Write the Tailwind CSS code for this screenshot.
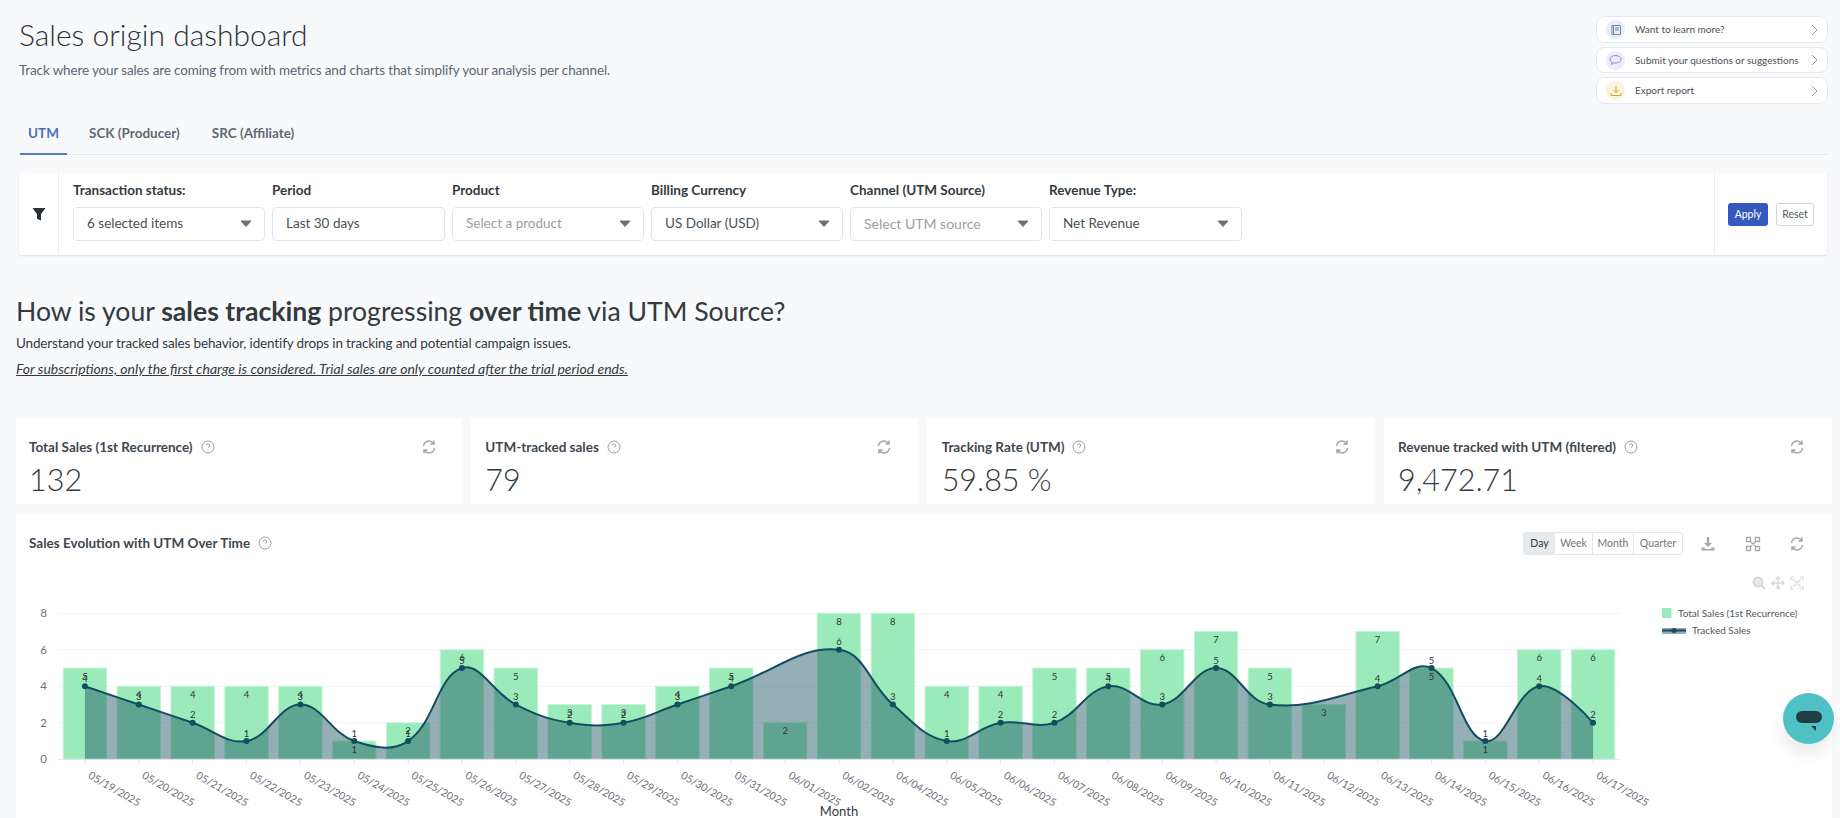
<!DOCTYPE html>
<html lang="en">
<head>
  <meta charset="UTF-8">
  <title>Sales origin dashboard</title>
  <script src="https://cdn.jsdelivr.net/npm/@tailwindcss/browser@4"></script>
</head>
<body class="relative h-[818px] overflow-hidden bg-[#f8f9fb] font-[Lato,sans-serif] text-[#343a40]">

  <!-- Header -->
  <header class="flex justify-between pl-[19px] pr-[12px] pt-[16px]">
    <div>
      <h1 class="-mt-[1px] pb-[1px] text-[30px] leading-[38px] font-light text-[#2c3137]">Sales origin dashboard</h1>
      <p class="mt-[6px] text-[13.5px] leading-[20px] tracking-[-0.14px] text-[#5f6670]">Track where your sales are coming from with metrics and charts that simplify your analysis per channel.</p>
    </div>
    <div class="flex w-[232px] flex-col gap-[4px]">
      <a class="flex h-[27px] items-center rounded-[8px] border border-[#e3e7ee] bg-white pl-[9px] pr-[9px] text-[10px] text-[#4b5058]">
        <span class="flex h-[19px] w-[19px] items-center justify-center rounded-full bg-[#e8ecf4]">
          <svg width="12" height="12" viewBox="0 0 12 12" fill="none" stroke="#6f86b8" stroke-width="1"><path d="M2 1.500h8.500v9H2zM3.500 1.500v9M5 4h4M5 6h4"/></svg>
        </span>
        <span class="ml-[10px] flex-1 whitespace-nowrap">Want to learn more?</span>
        <svg width="7" height="12" viewBox="0 0 7 12" fill="none" stroke="#8b9ab5" stroke-width="1"><path d="M1 1l5 5-5 5"/></svg>
      </a>
      <a class="flex h-[26px] items-center rounded-[8px] border border-[#e3e7ee] bg-white pl-[9px] pr-[9px] text-[10px] text-[#4b5058]">
        <span class="flex h-[19px] w-[19px] items-center justify-center rounded-full bg-[#efe9fb]">
          <svg width="13" height="12" viewBox="0 0 13 12" fill="none" stroke="#8d7fd0" stroke-width="0.9"><path d="M6.500 1.500c3 0 5.500 1.600 5.500 3.800S9.500 9 6.500 9c-.7 0-1.300-.1-1.900-.2L2.500 10.500l.4-2.300C1.700 7.500 1 6.500 1 5.300 1 3.100 3.500 1.500 6.500 1.500z"/></svg>
        </span>
        <span class="ml-[10px] flex-1 whitespace-nowrap">Submit your questions or suggestions</span>
        <svg width="7" height="12" viewBox="0 0 7 12" fill="none" stroke="#8b9ab5" stroke-width="1"><path d="M1 1l5 5-5 5"/></svg>
      </a>
      <a class="flex h-[27px] items-center rounded-[8px] border border-[#e3e7ee] bg-white pl-[9px] pr-[9px] text-[10px] text-[#4b5058]">
        <span class="flex h-[19px] w-[19px] items-center justify-center rounded-full bg-[#fbf4dc]">
          <svg width="12" height="12" viewBox="0 0 12 12" fill="none" stroke="#d5a52f" stroke-width="1"><path d="M6 1v6.500M3.500 5.200L6 7.700l2.500-2.500M1 8v2.500h10V8"/></svg>
        </span>
        <span class="ml-[10px] flex-1 whitespace-nowrap">Export report</span>
        <svg width="7" height="12" viewBox="0 0 7 12" fill="none" stroke="#8b9ab5" stroke-width="1"><path d="M1 1l5 5-5 5"/></svg>
      </a>
    </div>
  </header>

  <!-- Tabs -->
  <nav class="ml-[19px] mr-[13px] mt-[10px] flex gap-[12px] border-b border-[#e2e6ee] text-[13.5px] font-bold">
    <a class="-mb-px ml-[1px] flex h-[41px] w-[47px] items-center justify-center border-b-2 border-[#5a78c8] text-[#4f6fc0]">UTM</a>
    <a class="flex h-[40px] items-center px-[10px] pb-[1px] text-[#626973]">SCK (Producer)</a>
    <a class="flex h-[40px] items-center px-[10px] pb-[1px] text-[#626973]">SRC (Affiliate)</a>
  </nav>

  <!-- Filters -->
  <section class="ml-[19px] mr-[13px] mt-[18px] flex h-[82px] rounded-[3px] bg-white shadow-[0_1px_2px_rgba(0,0,0,0.12)]">
    <div class="my-[1px] flex w-[40px] items-center justify-center border-r border-[#e9ecf1]">
      <svg width="14" height="14" viewBox="0 0 14 14" fill="#2b2f36"><path d="M0.500 1h13L9 7v6.500l-4-1.700V7z"/></svg>
    </div>
    <div class="flex flex-1 gap-[7px] pl-[14px] pt-[8px]">
      <div class="w-[192px]">
        <label class="block text-[13.5px] leading-[18px] font-bold text-[#343a40]">Transaction status:</label>
        <div class="mt-[8px] flex h-[34px] items-center justify-between rounded-[4px] border border-[#e2e6ec] pb-[1px] pl-[13px] pr-[11px] text-[13.5px] text-[#495057]">6 selected items
          <svg width="14" height="9" viewBox="0 0 14 9" fill="#6c7178" stroke="#6c7178" stroke-linejoin="round"><path d="M2 2h10L7 7.500z"/></svg></div>
      </div>
      <div class="w-[173px]">
        <label class="block text-[13.5px] leading-[18px] font-bold text-[#343a40]">Period</label>
        <div class="mt-[8px] flex h-[34px] items-center rounded-[4px] border border-[#e2e6ec] pb-[1px] pl-[13px] text-[13.5px] text-[#495057]">Last 30 days</div>
      </div>
      <div class="w-[192px]">
        <label class="block text-[13.5px] leading-[18px] font-bold text-[#343a40]">Product</label>
        <div class="mt-[8px] flex h-[34px] items-center justify-between rounded-[4px] border border-[#e2e6ec] pb-[1px] pl-[13px] pr-[11px] text-[13.5px] text-[#9aa0a8]">Select a product
          <svg width="14" height="9" viewBox="0 0 14 9" fill="#6c7178" stroke="#6c7178" stroke-linejoin="round"><path d="M2 2h10L7 7.500z"/></svg></div>
      </div>
      <div class="w-[192px]">
        <label class="block text-[13.5px] leading-[18px] font-bold text-[#343a40]">Billing Currency</label>
        <div class="mt-[8px] flex h-[34px] items-center justify-between rounded-[4px] border border-[#e2e6ec] pb-[1px] pl-[13px] pr-[11px] text-[13.5px] text-[#495057]">US Dollar (USD)
          <svg width="14" height="9" viewBox="0 0 14 9" fill="#6c7178" stroke="#6c7178" stroke-linejoin="round"><path d="M2 2h10L7 7.500z"/></svg></div>
      </div>
      <div class="w-[192px]">
        <label class="block text-[13.5px] leading-[18px] font-bold text-[#343a40]">Channel (UTM Source)</label>
        <div class="mt-[8px] flex h-[34px] items-center justify-between rounded-[4px] border border-[#e2e6ec] pb-[1px] pl-[13px] pr-[11px] text-[14px] text-[#9aa0a8]">Select UTM source
          <svg width="14" height="9" viewBox="0 0 14 9" fill="#6c7178" stroke="#6c7178" stroke-linejoin="round"><path d="M2 2h10L7 7.500z"/></svg></div>
      </div>
      <div class="w-[193px]">
        <label class="block text-[13.5px] leading-[18px] font-bold text-[#343a40]">Revenue Type:</label>
        <div class="mt-[8px] flex h-[34px] items-center justify-between rounded-[4px] border border-[#e2e6ec] pb-[1px] pl-[13px] pr-[11px] text-[13.5px] text-[#495057]">Net Revenue
          <svg width="14" height="9" viewBox="0 0 14 9" fill="#6c7178" stroke="#6c7178" stroke-linejoin="round"><path d="M2 2h10L7 7.500z"/></svg></div>
      </div>
    </div>
    <div class="my-[1px] flex w-[113px] items-start gap-[8px] border-l border-[#e9ecf1] pl-[13px] pt-[29px]">
      <button class="h-[23px] w-[40px] rounded-[3px] bg-[#3557be] text-[10.5px] text-white">Apply</button>
      <button class="h-[23px] w-[38px] rounded-[3px] border border-[#ced4da] bg-white text-[10.5px] text-[#555b63]">Reset</button>
    </div>
  </section>

  <!-- Section intro -->
  <section class="mt-[39px] pl-[16px]">
    <h2 class="text-[26.6px] leading-[34px] font-normal text-[#343a40]">How is your <strong class="font-bold">sales tracking</strong> progressing <strong class="font-bold">over time</strong> via UTM Source?</h2>
    <p class="mt-[5px] text-[13.5px] leading-[20px] tracking-[-0.15px] text-[#343a40]">Understand your tracked sales behavior, identify drops in tracking and potential campaign issues.</p>
    <p class="mt-[6px] text-[14px] leading-[20px] italic underline text-[#343a40]">For subscriptions, only the first charge is considered. Trial sales are only counted after the trial period ends.</p>
  </section>

  <!-- KPI cards -->
  <section class="ml-[16px] mr-[8px] mt-[39px] grid grid-cols-[446px_446px_448px_448px] gap-[9.33px]">
    <div class="h-[86px] bg-white pl-[13px] pr-[25px] pt-[19px]">
      <div class="flex h-[20px] items-center text-[13.5px] font-bold text-[#414750]">Total Sales (1st Recurrence)
        <svg class="ml-[8px]" width="14" height="14" viewBox="0 0 14 14" fill="none" stroke="#9a9fa6"><circle cx="7" cy="7" r="6"/><path d="M5.300 5.500a1.700 1.700 0 1 1 2.500 1.500c-.6.300-.8.700-.8 1.200M7 10v.7"/></svg>
        <svg class="ml-auto" width="16" height="16" viewBox="0 0 16 16" fill="none" stroke="#a3a8ae" stroke-width="1.500"><path d="M2.500 7A5.500 5.500 0 0 1 12.500 4.500M13.500 9A5.500 5.500 0 0 1 3.500 11.500M13 1.500v3.500H9.500M3 14.500V11h3.500"/></svg>
      </div>
      <div class="mt-[4px] text-[30.5px] leading-[36px] font-light text-[#343a40]">132</div>
    </div>
    <div class="h-[86px] bg-white pl-[14px] pr-[25px] pt-[19px]">
      <div class="flex h-[20px] items-center text-[13.5px] font-bold text-[#414750]">UTM-tracked sales
        <svg class="ml-[8px]" width="14" height="14" viewBox="0 0 14 14" fill="none" stroke="#9a9fa6"><circle cx="7" cy="7" r="6"/><path d="M5.300 5.500a1.700 1.700 0 1 1 2.500 1.500c-.6.300-.8.700-.8 1.200M7 10v.7"/></svg>
        <svg class="ml-auto" width="16" height="16" viewBox="0 0 16 16" fill="none" stroke="#a3a8ae" stroke-width="1.500"><path d="M2.500 7A5.500 5.500 0 0 1 12.500 4.500M13.500 9A5.500 5.500 0 0 1 3.500 11.500M13 1.500v3.500H9.500M3 14.500V11h3.500"/></svg>
      </div>
      <div class="mt-[4px] text-[30.5px] leading-[36px] font-light text-[#343a40]">79</div>
    </div>
    <div class="h-[86px] bg-white pl-[15px] pr-[25px] pt-[19px]">
      <div class="flex h-[20px] items-center text-[13.5px] font-bold text-[#414750]">Tracking Rate (UTM)
        <svg class="ml-[8px]" width="14" height="14" viewBox="0 0 14 14" fill="none" stroke="#9a9fa6"><circle cx="7" cy="7" r="6"/><path d="M5.300 5.500a1.700 1.700 0 1 1 2.500 1.500c-.6.300-.8.700-.8 1.200M7 10v.7"/></svg>
        <svg class="ml-auto" width="16" height="16" viewBox="0 0 16 16" fill="none" stroke="#a3a8ae" stroke-width="1.500"><path d="M2.500 7A5.500 5.500 0 0 1 12.500 4.500M13.500 9A5.500 5.500 0 0 1 3.500 11.500M13 1.500v3.500H9.500M3 14.500V11h3.500"/></svg>
      </div>
      <div class="mt-[4px] text-[30.5px] leading-[36px] font-light text-[#343a40]">59.85 %</div>
    </div>
    <div class="h-[86px] bg-white pl-[14px] pr-[27px] pt-[19px]">
      <div class="flex h-[20px] items-center text-[13.5px] font-bold text-[#414750]">Revenue tracked with UTM (filtered)
        <svg class="ml-[8px]" width="14" height="14" viewBox="0 0 14 14" fill="none" stroke="#9a9fa6"><circle cx="7" cy="7" r="6"/><path d="M5.300 5.500a1.700 1.700 0 1 1 2.500 1.500c-.6.300-.8.700-.8 1.200M7 10v.7"/></svg>
        <svg class="ml-auto" width="16" height="16" viewBox="0 0 16 16" fill="none" stroke="#a3a8ae" stroke-width="1.500"><path d="M2.500 7A5.500 5.500 0 0 1 12.500 4.500M13.500 9A5.500 5.500 0 0 1 3.500 11.500M13 1.500v3.500H9.500M3 14.500V11h3.500"/></svg>
      </div>
      <div class="mt-[4px] text-[30.5px] leading-[36px] font-light text-[#343a40]">9,472.71</div>
    </div>
  </section>

  <!-- Chart card -->
  <section class="ml-[16px] mr-[8px] mt-[10px] bg-white">
    <div class="flex h-[41px] items-start pl-[13px] pr-[27px] pt-[18px]">
      <div class="flex h-[23px] items-center pb-[1px] text-[13.5px] font-bold text-[#414750]">Sales Evolution with UTM Over Time
        <svg class="ml-[8px]" width="14" height="14" viewBox="0 0 14 14" fill="none" stroke="#9a9fa6"><circle cx="7" cy="7" r="6"/><path d="M5.300 5.500a1.700 1.700 0 1 1 2.500 1.500c-.6.300-.8.700-.8 1.200M7 10v.7"/></svg>
      </div>
      <div class="ml-auto flex items-center">
        <div class="flex h-[23px] overflow-hidden rounded-[3px] border border-[#e2e6ec] text-[10.5px] text-[#6f757d]">
          <span class="flex w-[31px] items-center justify-center bg-[#e6e9ed] text-[#343a40]">Day</span>
          <span class="flex w-[38px] items-center justify-center border-r border-[#e2e6ec]">Week</span>
          <span class="flex w-[41px] items-center justify-center border-r border-[#e2e6ec]">Month</span>
          <span class="flex w-[48px] items-center justify-center">Quarter</span>
        </div>
        <svg class="ml-[17px]" width="16" height="16" viewBox="0 0 16 16" fill="#a3a8ae"><path d="M6.800 1h2.400v6h2.800L8 11 4 7h2.800zM1.500 11.500h3l1 1.500h5l1-1.500h3v3h-13z"/></svg>
        <svg class="ml-[29px]" width="16" height="16" viewBox="0 0 16 16" fill="none" stroke="#a3a8ae" stroke-width="1.300"><path d="M1.500 1.500h4v4h-4zM10.500 1.500h4v4h-4zM1.500 10.500h4v4h-4zM10.500 10.500h4v4h-4zM5.500 5.500l5 5M10.500 5.500l-5 5"/></svg>
        <svg class="ml-[28px]" width="16" height="16" viewBox="0 0 16 16" fill="none" stroke="#a3a8ae" stroke-width="1.500"><path d="M2.500 7A5.500 5.500 0 0 1 12.500 4.500M13.500 9A5.500 5.500 0 0 1 3.500 11.500M13 1.500v3.500H9.500M3 14.500V11h3.500"/></svg>
      </div>
    </div>
    <!-- viewBox uses page coordinates so positions read straight off the screenshot -->
    <svg id="chart" class="block" width="1816" height="263" viewBox="16 555 1816 263"></svg>
  </section>

  <!-- Chat widget -->
  <div class="absolute left-[1783px] top-[693px] flex h-[51px] w-[51px] items-center justify-center rounded-full bg-[#4fc1c4] pb-[3px] shadow-[-2px_12px_14px_rgba(0,0,0,0.07)]">
    <span class="relative block h-[12px] w-[26px] rounded-full bg-[#1f3d42]">
      <svg class="absolute left-[15px] top-[15px]" width="5" height="5" viewBox="0 0 5 5" fill="#1f3d42"><path d="M0 0h5v5z"/></svg>
    </span>
  </div>

  <script>
    var dates = ['05/19','05/20','05/21','05/22','05/23','05/24','05/25','05/26','05/27','05/28','05/29','05/30','05/31','06/01','06/02','06/04','06/05','06/06','06/07','06/08','06/09','06/10','06/11','06/12','06/13','06/14','06/15','06/16','06/17'];
    var total = [5,4,4,4,4,1,2,6,5,3,3,4,5,2,8,8,4,4,5,5,6,7,5,3,7,5,1,6,6];
    var tracked = [4,3,2,1,3,1,1,5,3,2,2,3,4,null,6,3,1,2,2,4,3,5,3,null,4,5,1,4,2];
    var svg = document.getElementById('chart');
    var left = 58, right = 1620, base = 759.3, unit = 18.25, step = (right - left) / dates.length;
    function X(i) { return left + step * (i + 0.5); }
    function Y(v) { return base - v * unit; }

    function add(tag, attrs, text) {
      var el = document.createElementNS('http://www.w3.org/2000/svg', tag);
      for (var k in attrs) el.setAttribute(k, attrs[k]);
      if (text !== undefined) el.textContent = text;
      svg.appendChild(el);
      return el;
    }

    // grid and y axis
    [0,2,4,6,8].forEach(function (v) {
      if (v) add('line', { x1: left, x2: right, y1: Y(v), y2: Y(v), stroke: '#f1f3f6' });
      add('text', { x: 47, y: Y(v) + 4, 'text-anchor': 'end', 'font-size': 11.5, fill: '#6e7079' }, v);
    });

    // bars
    total.forEach(function (v, i) {
      add('rect', { x: X(i) - 21.7, y: Y(v), width: 43.4, height: v * unit, fill: '#9bebba', stroke: '#c4f3d7', 'stroke-width': 1 });
    });

    // smoothed line, skips empty days like connectNulls
    var pts = [];
    tracked.forEach(function (v, i) { if (v !== null) pts.push([X(i), Y(v)]); });
    var smooth = 0.4, d = 'M' + pts[0][0] + ' ' + pts[0][1];
    function vec(i) {
      if (i === 0 || i === pts.length - 1) return [0, 0, 0.5];
      var p = pts[i - 1], c = pts[i], n = pts[i + 1];
      var a = Math.hypot(c[0] - p[0], c[1] - p[1]), b = Math.hypot(n[0] - c[0], n[1] - c[1]);
      return [n[0] - p[0], n[1] - p[1], b / (a + b)];
    }
    for (var i = 0; i < pts.length - 1; i++) {
      var v0 = vec(i), v1 = vec(i + 1);
      var c1x = pts[i][0] + v0[0] * smooth * v0[2], c1y = pts[i][1] + v0[1] * smooth * v0[2];
      var c2x = pts[i + 1][0] - v1[0] * smooth * (1 - v1[2]), c2y = pts[i + 1][1] - v1[1] * smooth * (1 - v1[2]);
      d += 'C' + c1x + ' ' + c1y + ' ' + c2x + ' ' + c2y + ' ' + pts[i + 1][0] + ' ' + pts[i + 1][1];
    }
    add('path', { d: d + 'L' + pts[pts.length - 1][0] + ' ' + base + 'L' + pts[0][0] + ' ' + base + 'Z', fill: '#134e5e', 'fill-opacity': 0.45 });
    add('path', { d: d, fill: 'none', stroke: '#134e5e', 'stroke-width': 2 });
    pts.forEach(function (p) { add('circle', { cx: p[0], cy: p[1], r: 3, fill: '#134e5e' }); });

    // x axis
    add('line', { x1: left, x2: right, y1: base, y2: base, stroke: '#dfe3ea' });
    dates.forEach(function (s, i) {
      add('line', { x1: X(i), x2: X(i), y1: base, y2: base + 5, stroke: '#dfe3ea' });
      add('text', { x: X(i) + 4, y: 778, 'font-size': 10.5, fill: '#6e7079', transform: 'rotate(30 ' + (X(i) + 4) + ' 775)' }, s + '/2025');
    });
    add('text', { x: 839, y: 816, 'text-anchor': 'middle', 'font-size': 13, fill: '#343a40' }, 'Month');

    // value labels
    total.forEach(function (v, i) {
      add('text', { x: X(i), y: Y(v) + 11.5, 'text-anchor': 'middle', 'font-size': 9.5, fill: '#333' }, v);
    });
    tracked.forEach(function (v, i) {
      if (v !== null) add('text', { x: X(i), y: Y(v) - 4.5, 'text-anchor': 'middle', 'font-size': 9.5, fill: '#333' }, v);
    });

    // toolbox
    var g = '#d5d9de';
    add('circle', { cx: 1758, cy: 582, r: 4.5, fill: '#e6e8eb', stroke: g, 'stroke-width': 2 });
    add('path', { d: 'M1761 585l4 4', stroke: g, 'stroke-width': 2 });
    add('path', { d: 'M1778 577v12M1772 583h12M1776 579l2-2 2 2M1776 587l2 2 2-2M1774 581l-2 2 2 2M1782 581l2 2-2 2', fill: 'none', stroke: g, 'stroke-width': 1.5 });
    add('path', { d: 'M1791 580v-3h3M1800 577h3v3M1803 586v3h-3M1794 589h-3v-3M1793 579l8 8M1801 579l-8 8', fill: 'none', stroke: g, 'stroke-width': 1.2 });

    // legend
    add('rect', { x: 1662, y: 608, width: 9.5, height: 10, fill: '#9bebba' });
    add('text', { x: 1678, y: 616.5, 'font-size': 10, fill: '#51565e' }, 'Total Sales (1st Recurrence)');
    add('rect', { x: 1662, y: 628, width: 24, height: 6, fill: '#94abb3' });
    add('line', { x1: 1662, x2: 1686, y1: 630.5, y2: 630.5, stroke: '#134e5e', 'stroke-width': 2 });
    add('circle', { cx: 1674, cy: 630.5, r: 2.5, fill: '#134e5e' });
    add('text', { x: 1692, y: 633.5, 'font-size': 10, fill: '#51565e' }, 'Tracked Sales');
  </script>
</body>
</html>
